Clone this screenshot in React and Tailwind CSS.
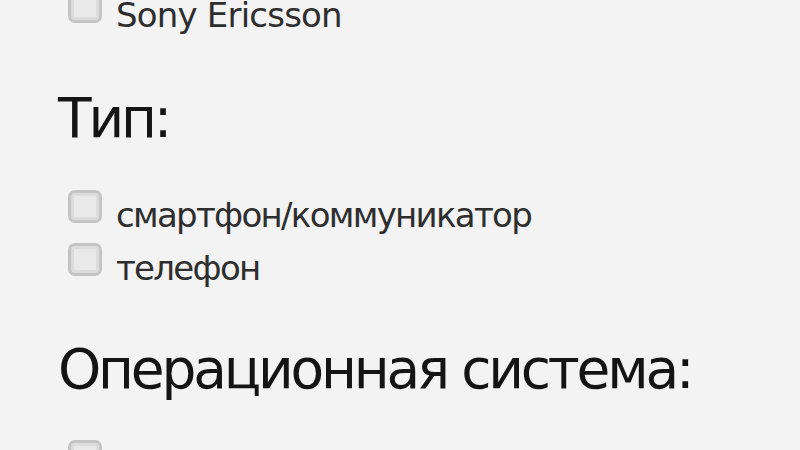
import React from 'react';

const Check = () => (
  <span className="mt-[1px] box-border inline-block h-[33px] w-[34px] shrink-0 rounded-[7px] border-[3px] border-[#c4c4c4] bg-[#e9e9e9] shadow-[inset_0_0_0_3px_#dcdcdc]" />
);

const Item = ({ label, latin }) => (
  <div className="flex h-[53px] items-start gap-[14px] text-[34px] leading-[53px] text-[#2e2e2e]">
    <Check />
    <span className={latin ? 'tracking-[-0.8px]' : 'tracking-[-1.7px]'}>{label}</span>
  </div>
);

const Heading = ({ children }) => (
  <h2 className="-ml-[10px] h-[60px] text-[55px] leading-[60px] tracking-[-3.2px] text-[#141414]">{children}</h2>
);

export default function App() {
  return (
    <div className="h-[450px] w-[800px] overflow-hidden bg-[#f3f3f3] font-['DejaVu_Sans',sans-serif]">
      <div className="-mt-[11px] pl-[68px]">
        <Item label="Sony Ericsson" latin />
        <div className="mt-[46px]">
          <Heading>Тип:</Heading>
        </div>
        <div className="mt-[41px]">
          <Item label="смартфон/коммуникатор" />
          <Item label="телефон" />
        </div>
        <div className="mt-[44px]">
          <Heading>Операционная система:</Heading>
        </div>
        <div className="mt-[40px]">
          <Item label="android" latin />
        </div>
      </div>
    </div>
  );
}
